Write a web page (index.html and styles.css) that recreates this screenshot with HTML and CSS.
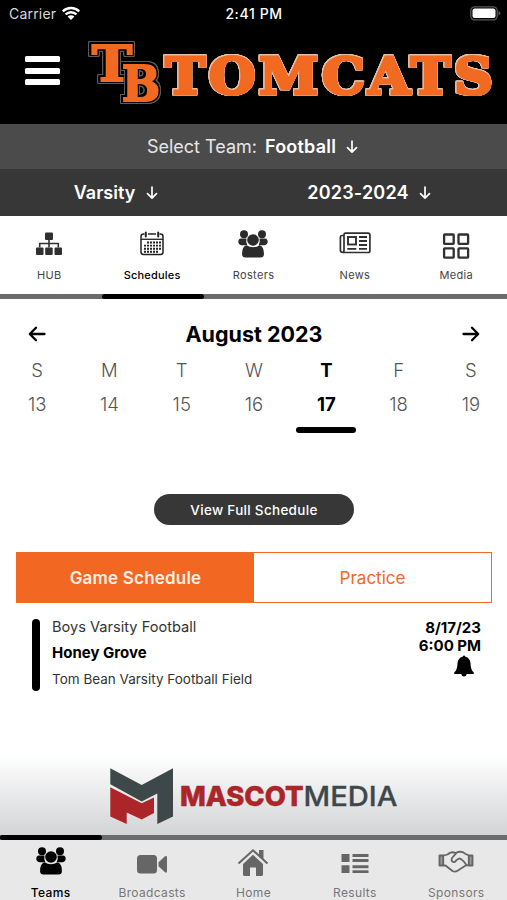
FILE: index.html
```html
<!DOCTYPE html>
<html lang="en">
<head>
<meta charset="utf-8">
<meta name="viewport" content="width=device-width, initial-scale=1">
<title>Tomcats Schedules</title>
<link rel="stylesheet" href="styles.css">
</head>
<body>
<svg class="defs" width="0" height="0">
  <symbol id="people" viewBox="0 0 30 28">
    <circle cx="6" cy="4.3" r="4"/><circle cx="24" cy="4.3" r="4"/>
    <path d="M3 8.600h5.500q-.9 3.500.9 6.600H3.500Q.3 14.600.3 11.800T3 8.600z"/>
    <path d="M27 8.600h-5.500q.9 3.500-.9 6.600h5.900q3.200-.6 3.200-3.400T27 8.600z"/>
    <circle cx="15" cy="10" r="5.800"/>
    <path d="M8.400 15.200Q15 19.400 21.600 15.200q4.700 1.700 4.300 9.300-.2 3-3.200 3h-15.400q-3 0-3.200-3-.4-7.600 4.300-9.300z"/>
  </symbol>
  <symbol id="down" viewBox="0 0 12 14"><path d="M6 1v11M1.500 7.700 6 12.200l4.500-4.500" fill="none" stroke="currentColor" stroke-width="1.700" stroke-linecap="round" stroke-linejoin="round"/></symbol>
  <symbol id="back" viewBox="0 0 18 16"><path d="M16.500 8H2M8 1.800 1.800 8 8 14.200" fill="none" stroke="currentColor" stroke-width="2.300" stroke-linecap="round" stroke-linejoin="round"/></symbol>
</svg>

<header class="top">
  <div class="status">
    <span class="carrier">Carrier</span>
    <svg class="wifi" width="20" height="15" viewBox="0 0 20 15"><path d="M1.800 5.300a11.700 11.700 0 0 1 16.400 0M4.600 8.400a7.700 7.700 0 0 1 10.800 0" fill="none" stroke="#fff" stroke-width="2.400"/><path d="M6.600 10.500a4.900 4.900 0 0 1 6.800 0L10 14z" fill="#fff"/></svg>
    <span class="clock">2:41 PM</span>
    <svg class="battery" width="31" height="15" viewBox="0 0 31 15"><rect x=".8" y=".8" width="26.400" height="13" rx="3.800" fill="none" stroke="#59595b" stroke-width="1.300"/><rect x="2.500" y="2.500" width="23" height="9.600" rx="2" fill="#fff"/><path d="M28.500 5v4.600q1.800-.6 1.800-2.300T28.500 5z" fill="#59595b"/></svg>
  </div>
  <div class="brand">
    <div class="burger"><i></i><i></i><i></i></div>
    <svg class="logo" width="412" height="70" viewBox="86 38 412 70">
      <text class="mono" x="92" y="80.500" textLength="40" lengthAdjust="spacingAndGlyphs">T</text>
      <text class="mono" x="122" y="101" textLength="38" lengthAdjust="spacingAndGlyphs">B</text>
      <text class="wordmark" x="165.500" y="93.500" textLength="331" lengthAdjust="spacingAndGlyphs">TOMCATS</text>
    </svg>
  </div>
</header>

<div class="team"><span class="lbl">Select Team:</span><b>Football</b><svg width="12" height="14"><use href="#down"/></svg></div>
<div class="filters">
  <div class="filter level"><b>Varsity</b><svg width="12" height="14"><use href="#down"/></svg></div>
  <div class="filter season"><b>2023-2024</b><svg width="12" height="14"><use href="#down"/></svg></div>
</div>

<nav class="tabs">
  <a class="tab hub"><svg width="28" height="30" viewBox="0 0 28 30"><g fill="#303030"><rect x="10" y="3.500" width="8" height="7.500" rx="1"/><rect x="1" y="18.500" width="7.500" height="7.500" rx="1"/><rect x="10.200" y="18.500" width="7.500" height="7.500" rx="1"/><rect x="19.500" y="18.500" width="7.500" height="7.500" rx="1"/></g><path d="M14 10v8.500M4.700 18.500v-4h18.600v4" fill="none" stroke="#303030" stroke-width="1.600"/></svg><span>HUB</span></a>
  <a class="tab on"><svg width="24" height="30" viewBox="0 0 24 30"><rect x="1" y="5" width="22" height="20.500" rx="2.500" fill="none" stroke="#222" stroke-width="1.500"/><path d="M1 10.300h22" stroke="#222" stroke-width="1.300"/><path d="M4.500 5h15" stroke="#fff" stroke-width="2"/><path d="M8 5h8" stroke="#222" stroke-width="1.500"/><path d="M5.800 3.500v4M18.200 3.500v4" stroke="#222" stroke-width="2" stroke-linecap="round"/><path d="M7 13.500h14M4 16.600h17M4 19.700h17M4 22.700h14" stroke="#222" stroke-width="1.900" stroke-dasharray="2 1"/></svg><span>Schedules</span></a>
  <a class="tab"><svg width="30" height="30" viewBox="0 0 30 30" fill="#2b2b2b"><use href="#people" x="0" y="1" width="30" height="28"/></svg><span>Rosters</span></a>
  <a class="tab"><svg width="32" height="30" viewBox="0 0 32 30" fill="none" stroke="#303030"><path d="M5 6.500H3q-1.600 0-1.600 1.600v13q0 2.400 2.700 2.400h25q1.800 0 1.800-1.800V6q0-1.800-1.800-1.800H6.500Q5 4.200 5 6v15q0 2.500-1.500 2.500" stroke-width="1.700"/><rect x="9" y="8" width="8" height="7.500" stroke-width="1.900"/><path d="M20 8h8M20 12h8M20 16h8M8.300 19.800h9M20 19.800h8" stroke-width="1.800"/></svg><span>News</span></a>
  <a class="tab"><svg width="28" height="30" viewBox="0 0 28 30" fill="none" stroke="#303030" stroke-width="2.300"><rect x="2.100" y="5.500" width="9.600" height="9.400" rx=".6"/><rect x="16.500" y="5.500" width="9.600" height="9.400" rx=".6"/><rect x="2.100" y="19.300" width="9.600" height="9.400" rx=".6"/><rect x="16.500" y="19.300" width="9.600" height="9.400" rx=".6"/></svg><span>Media</span></a>
</nav>
<div class="track second"><i></i></div>

<main>
  <div class="month"><svg width="18" height="16"><use href="#back"/></svg><h1>August 2023</h1><svg class="next" width="18" height="16"><use href="#back"/></svg></div>
  <div class="week">
    <div class="day"><span>S</span><span>13</span></div>
    <div class="day"><span>M</span><span>14</span></div>
    <div class="day"><span>T</span><span>15</span></div>
    <div class="day"><span>W</span><span>16</span></div>
    <div class="day today"><span>T</span><span>17</span><i></i></div>
    <div class="day"><span>F</span><span>18</span></div>
    <div class="day"><span>S</span><span>19</span></div>
  </div>
  <button class="full">View Full Schedule</button>
  <div class="switch"><div class="active">Game Schedule</div><div>Practice</div></div>
  <article class="event">
    <i class="rail"></i>
    <div class="info"><p class="league">Boys Varsity Football</p><p class="rival">Honey Grove</p><p class="venue">Tom Bean Varsity Football Field</p></div>
    <div class="when"><span class="date">8/17/23</span><span class="time">6:00 PM</span>
      <svg width="20" height="22" viewBox="0 0 20 22"><path d="M8.500 1.800Q10-.9 11.500 1.800q4.500 1.200 5 6.500.1 6.600 3.300 9.300v1.400H.2v-1.400q3.200-2.700 3.300-9.300.5-5.300 5-6.500zM7.300 19h5.400q-.4 2.600-2.700 2.600T7.300 19z"/></svg>
    </div>
  </article>
</main>

<div class="sponsor">
  <svg width="290" height="60" viewBox="109 766 290 60">
    <path d="M110.300 768.300 141.700 785 173 768.300v48.200l-15.700 7.500v-30.500l-15.600 8-31.400-17.200z" fill="#3e484a"/>
    <path d="M110.300 787.300l31.400 16 12.300-5.800V813l-12.300 6.500-15-7V824l-16.400-7.500z" fill="#ac2529"/>
    <text x="180" y="806.300" textLength="123.500" lengthAdjust="spacingAndGlyphs" class="mascot">MASCOT</text>
    <text x="303.500" y="806.300" textLength="94" lengthAdjust="spacingAndGlyphs" class="media">MEDIA</text>
  </svg>
</div>
<div class="track first"><i></i></div>
<nav class="bottom">
  <a class="tab on"><svg width="30" height="30" viewBox="0 0 30 30"><use href="#people" y="1" width="30" height="28"/></svg><span>Teams</span></a>
  <a class="tab"><svg width="32" height="30" viewBox="0 0 32 30" fill="#666"><rect x="1" y="9" width="20" height="18.500" rx="3.500"/><path d="M22.500 16.300 29 10.300q2-1 2 1v14q0 2-2 1l-6.500-6z"/></svg><span>Broadcasts</span></a>
  <a class="tab"><svg width="32" height="30" viewBox="0 0 32 30" fill="#666"><path d="M6 18 16 8.700 26 18v10.500q0 1.500-1.500 1.500H19v-8.500h-6V30H7.500Q6 30 6 28.500z"/><path d="M1.500 17.500 16 4.300l14.500 13.200" fill="none" stroke="#666" stroke-width="2"/><path d="M22 4h4.500v9L22 9z"/></svg><span>Home</span></a>
  <a class="tab"><svg width="30" height="30" viewBox="0 0 30 30" fill="#666"><path d="M1.500 8h8v8h-8zM1.500 19.300h8v7.800h-8zM12.500 8h16v2.900h-16zM12.500 13h16v2.900h-16zM12.500 19.300h16v2.900h-16zM12.500 24.200h16v2.900h-16z"/></svg><span>Results</span></a>
  <a class="tab"><svg width="36" height="30" viewBox="0 0 36 30" fill="none" stroke="#666" stroke-width="1.800" stroke-linejoin="round"><path d="M1.500 9.500h3.700v10H1.500zM30.800 9.500h3.700v10h-3.700z" fill="#999" stroke-width="1.900"/><path d="M5.500 9.500 9.500 8.500q3.500-3.500 8-1.500Q24 4 27.500 8l3 1.200M5.500 19.500H7.500l7 5.500q2.500 1.500 5-.3L28.500 19l2.500.3M18.300 7.200 14 12q-1.200 3.300 1.300 4 1.900.4 3.200-2l2.700-1.600q3.500 1 6.800 6"/></svg><span>Sponsors</span></a>
</nav>
</body>
</html>
```

FILE: styles.css
```css
* { box-sizing: border-box; }
body { margin: 0; width: 507px; height: 900px; overflow: hidden; display: flex; flex-direction: column; background: #fff; color: #000; font-family: Inter, "Liberation Sans", sans-serif; }
svg { display: block; flex: none; }
.defs { display: none; }
p, h1 { margin: 0; }

.top { height: 124px; background: #000; color: #fff; }
.status { height: 28px; display: grid; grid-template-columns: 54px 1fr auto 1fr 31px; align-items: center; padding: 0 3px 1px 9px; font-size: 14px; }
.carrier { color: #d8d8d8; letter-spacing: .2px; }
.wifi { margin-left: -2px; }
.clock { font-weight: 500; letter-spacing: .6px; margin-left: -28px; }
.battery { grid-column: 5; margin-left: -3px; }
.brand { display: flex; padding: 10px 0 0 25px; }
.burger { display: flex; flex-direction: column; gap: 5.500px; width: 35px; margin: 18px 26px 0 0; }
.burger i { height: 6px; background: #fff; border-radius: 1.500px; }
.logo { overflow: visible; }
.logo text { font-family: "DejaVu Serif", serif; font-weight: 700; fill: #f26a21; stroke: #f26a21; }
.mono { font-size: 48px; stroke-width: 2.200px; filter: drop-shadow(1.200px 0 0 #000) drop-shadow(-1.200px 0 0 #000) drop-shadow(0 1.200px 0 #000) drop-shadow(0 -1.200px 0 #000) drop-shadow(1px 0 0 #5c5c5a) drop-shadow(-1px 0 0 #5c5c5a) drop-shadow(0 1px 0 #5c5c5a) drop-shadow(0 -1px 0 #5c5c5a); }
.wordmark { font-size: 50px; letter-spacing: 3.500px; stroke-width: 3.200px; filter: drop-shadow(.8px 0 0 #e3c0a8) drop-shadow(-.8px 0 0 #e3c0a8) drop-shadow(0 .8px 0 #e3c0a8) drop-shadow(0 -.8px 0 #e3c0a8); }

.team { height: 45px; background: #4b4b4b; color: #fff; display: flex; align-items: center; justify-content: center; font-size: 18px; }
.team .lbl { color: #e6e6e6; margin: 0 8px 0 -2px; }
.team b { margin-right: 10px; letter-spacing: .2px; }
b { font-weight: 600; }
.filters { height: 47px; background: #373737; color: #fff; display: flex; font-size: 18px; }
.filter { display: flex; align-items: center; justify-content: center; gap: 11px; }
.level { width: 232px; }
.season { width: 274px; letter-spacing: .2px; }
.season svg { margin-left: -1px; }

.tabs, .bottom { display: grid; grid-template-columns: repeat(5, 1fr); }
.tabs { height: 78px; padding-top: 13px; }
.tab { display: flex; flex-direction: column; align-items: center; font-size: 11px; line-height: 14px; letter-spacing: .35px; color: #444; }
.tabs span { margin-top: 9px; }
.hub { margin-left: -3px; }
.tab.on { color: #000; font-weight: 500; }
.tabs .on { letter-spacing: .2px; }
.track { height: 5px; background: #6b6b6b; }
.track i { display: block; width: 101.500px; height: 5px; border-radius: 3px; background: #000; }
.second i { margin-left: 102px; }

main { height: 456px; }
.month { display: flex; justify-content: space-between; align-items: center; height: 28px; margin: 21px 27px 0 28px; }
.month h1 { font-size: 21.500px; font-weight: 650; line-height: 28px; }
.next { transform: scaleX(-1); }
.week { display: grid; grid-template-columns: repeat(7, 72.300px); margin: 5px 0 0 1px; height: 83px; }
.day { display: flex; flex-direction: column; align-items: center; font-size: 18.500px; font-weight: 300; line-height: 34px; color: #555; }
.today { color: #000; font-weight: 700; }
.today i { width: 60px; height: 6px; border-radius: 3px; background: #000; margin-top: 6px; }
.full { display: block; width: 200px; height: 31px; margin: 58px auto 0 154px; border: 0; border-radius: 16px; background: #373737; color: #fff; font: 500 13.500px/32px Inter, sans-serif; padding: 0; letter-spacing: .3px; }
.switch { display: flex; width: 476px; height: 51px; margin: 27px 0 0 16px; border: 1px solid #f26a21; font-size: 17px; line-height: 50px; text-align: center; color: #f26a21; }
.switch div { width: 237px; }
.switch .active { background: #f26722; color: #fff0e6; font-weight: 600; letter-spacing: .2px; }
.event { display: flex; margin: 16px 26px 0 32px; }
.rail { width: 8px; height: 72px; border-radius: 4px; background: #000; }
.info { flex: 1; margin: -5px 0 0 12px; line-height: 26px; color: #333; }
.league { font-size: 14.600px; }
.rival { font-size: 15px; font-weight: 700; color: #000; }
.venue { font-size: 13.500px; }
.when { display: flex; flex-direction: column; align-items: flex-end; font-size: 15px; font-weight: 650; line-height: 18px; }
.when svg { margin: 0 7px 0 0; }

.sponsor { height: 80px; padding: 11px 0 0 109px; background: linear-gradient(#fff, #d3d4d6); }
.mascot, .media { font-family: Inter, sans-serif; font-size: 27.500px; }
.mascot { font-weight: 800; fill: #ac2529; stroke: #ac2529; stroke-width: .5px; }
.media { font-weight: 500; fill: #3e484a; stroke: #3e484a; stroke-width: .3px; }
.bottom { height: 60px; background: #e8e8e8; padding-top: 6px; }
.bottom .tab { color: #777; font-size: 12px; }
.bottom .tab.on { color: #000; }
.bottom span { margin-top: 10px; }
```
